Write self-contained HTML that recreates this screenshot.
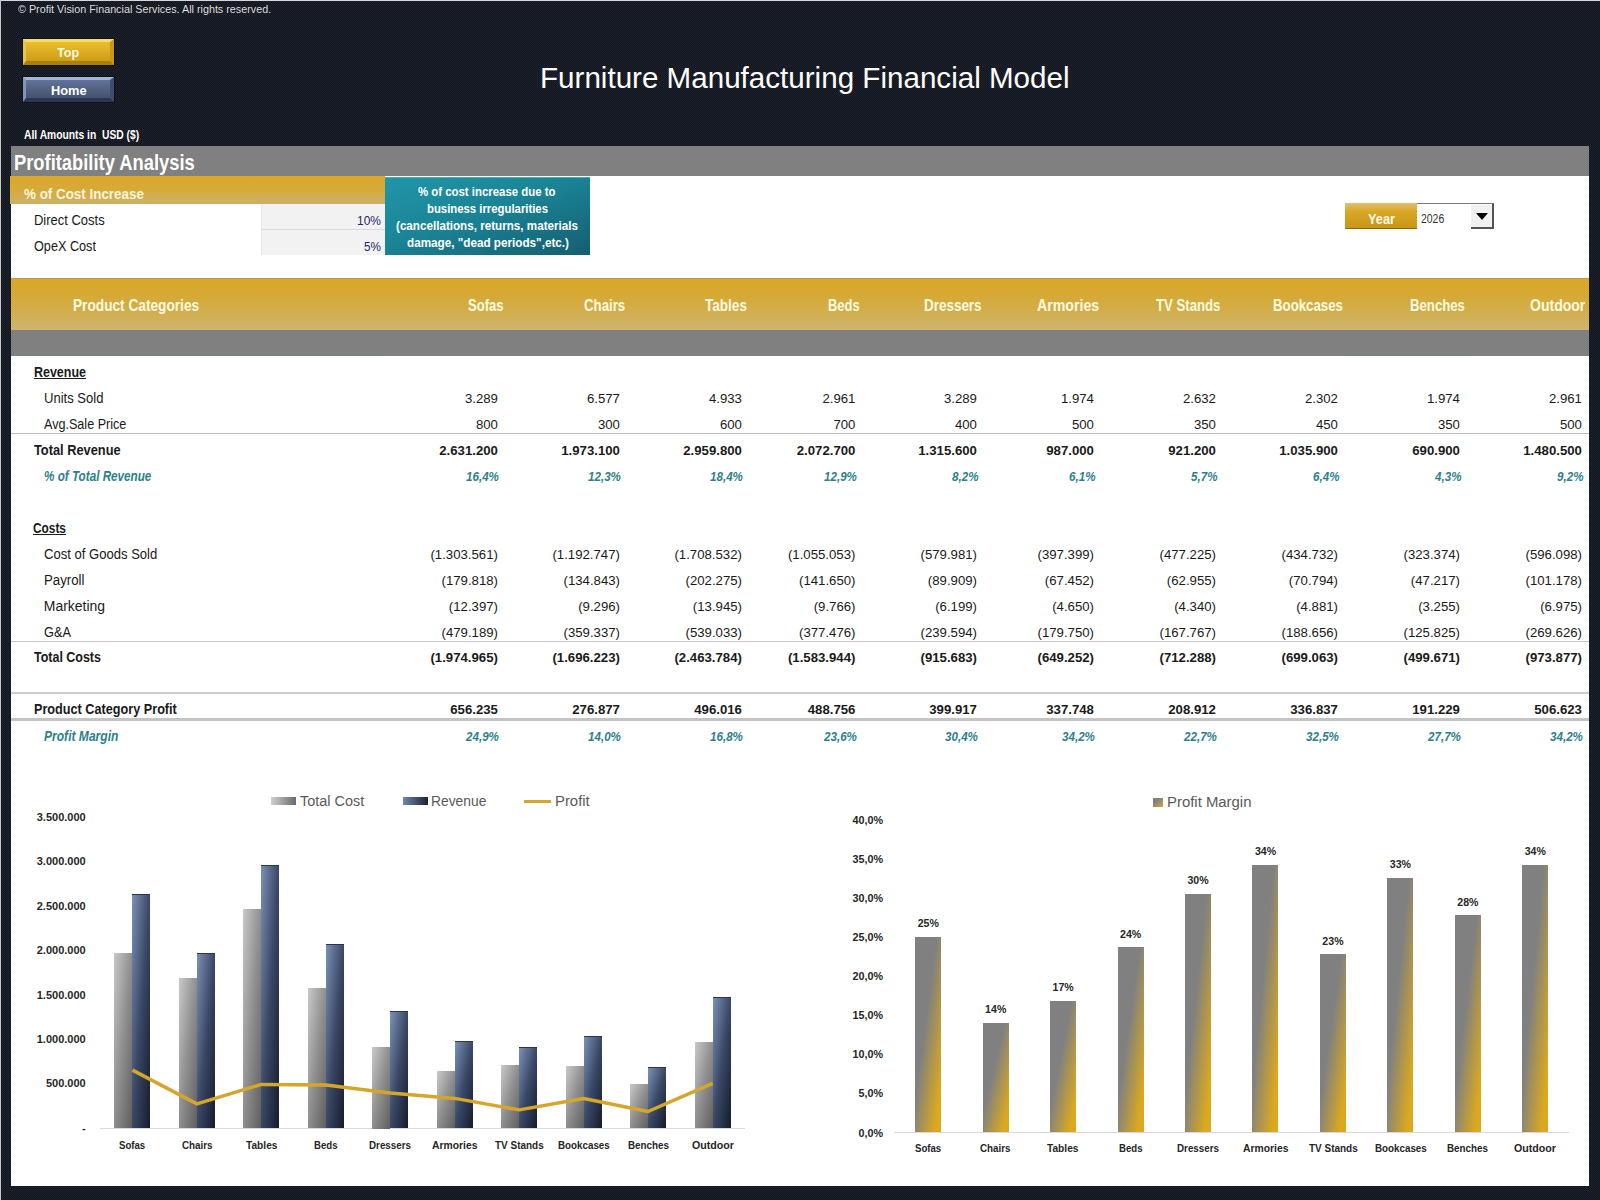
<!DOCTYPE html>
<html><head><meta charset="utf-8"><title>Furniture Manufacturing Financial Model</title>
<style>
html,body{margin:0;padding:0}
html{background:#181b25}
body{width:1600px;height:1200px;position:relative;overflow:hidden;background-color:#181b25;background-image:repeating-conic-gradient(#10131b 0 25%,#20242e 0 50%);background-size:2px 2px;font-family:"Liberation Sans",sans-serif}
.t{position:absolute;white-space:nowrap;transform-origin:0 0}
.r{position:absolute}
#edge{position:absolute;left:0;top:0;width:1600px;height:1px;background:#d8d8d8}
#edgel{position:absolute;left:0;top:0;width:1px;height:1200px;background:#c8c8c8}
</style></head><body>
<div id="edge"></div><div id="edgel"></div>
<div class="t" style="left:17.80px;top:3.00px;font-size:11.63px;line-height:11.63px;color:#dcdcdc;transform:scaleX(0.9264)">© Profit Vision Financial Services. All rights reserved.</div>
<div class="r" style="left:23.00px;top:39.00px;width:90.50px;height:26.00px;background:linear-gradient(#e9bf2e,#d9aa1e 60%,#cf9c18);border-style:solid;border-width:3px 4px 4px 3px;border-color:#f7dc6a #c9971a #a9800f #e9c548;box-sizing:border-box;box-shadow:0 0 0 1px rgba(0,0,0,.35)"></div>
<div class="t" style="left:57.30px;top:46.00px;font-size:13.66px;line-height:13.66px;color:#fffbe0;font-weight:bold;transform:scaleX(0.9191)">Top</div>
<div class="r" style="left:23.00px;top:77.00px;width:90.50px;height:25.00px;background:linear-gradient(#62749a,#50607f 55%,#44526f);border-style:solid;border-width:3px 4px 4px 3px;border-color:#a3b6da #3f4c6a #2b3650 #8394bb;box-sizing:border-box;box-shadow:0 0 0 1px rgba(0,0,0,.35)"></div>
<div class="t" style="left:50.50px;top:84.00px;font-size:13.66px;line-height:13.66px;color:#ffffff;font-weight:bold;transform:scaleX(0.9373)">Home</div>
<div class="t" style="left:540.30px;top:63.00px;font-size:29.94px;line-height:29.94px;color:#ffffff;transform:scaleX(0.9883)">Furniture Manufacturing Financial Model</div>
<div class="t" style="left:23.75px;top:129.00px;font-size:12.35px;line-height:12.35px;color:#ffffff;font-weight:bold;transform:scaleX(0.8340);white-space:pre">All Amounts in  USD ($)</div>
<div class="r" style="left:11.00px;top:146.00px;width:1578.00px;height:1040.00px;background:#fff"></div>
<div class="r" style="left:11.00px;top:146.00px;width:1578.00px;height:30.00px;background:#808080"></div>
<div class="t" style="left:14.25px;top:152.00px;font-size:21.80px;line-height:21.80px;color:#ffffff;font-weight:bold;transform:scaleX(0.8412)">Profitability Analysis</div>
<div class="r" style="left:10.00px;top:176.00px;width:375.00px;height:28.00px;background:linear-gradient(#dba726,#d6aa3c 50%,#cdb06a)"></div>
<div class="t" style="left:23.75px;top:187.00px;font-size:14.53px;line-height:14.53px;color:#fdf6d8;font-weight:bold;transform:scaleX(0.9230)">% of Cost Increase</div>
<div class="t" style="left:33.75px;top:213.00px;font-size:14.53px;line-height:14.53px;color:#1a1a1a;transform:scaleX(0.8940)">Direct Costs</div>
<div class="t" style="left:33.75px;top:239.00px;font-size:14.53px;line-height:14.53px;color:#1a1a1a;transform:scaleX(0.8723)">OpeX Cost</div>
<div class="r" style="left:261.00px;top:204.00px;width:124.00px;height:51.00px;background:#f2f2f2;border-left:1px solid #e6e6e6;box-sizing:border-box"></div>
<div class="r" style="left:261.00px;top:229.00px;width:124.00px;height:1.00px;background:#d9d9d9"></div>
<div class="t" style="left:357.00px;top:214.00px;font-size:13.66px;line-height:13.66px;color:#26266e;transform:scaleX(0.8746)">10%</div>
<div class="t" style="left:364.00px;top:240.00px;font-size:13.66px;line-height:13.66px;color:#26266e;transform:scaleX(0.8560)">5%</div>
<div class="r" style="left:385.00px;top:177.00px;width:205.00px;height:78.00px;background:linear-gradient(160deg,#2196a9 0%,#1a8496 45%,#145e70 100%);border-top:1px solid #4aa9b8;box-sizing:border-box"></div>
<div class="t" style="left:418.00px;top:185.00px;font-size:13.08px;line-height:13.08px;color:#ffffff;font-weight:bold;transform:scaleX(0.8716)">% of cost increase due to</div>
<div class="t" style="left:427.00px;top:202.00px;font-size:13.08px;line-height:13.08px;color:#ffffff;font-weight:bold;transform:scaleX(0.8669)">business irregularities</div>
<div class="t" style="left:396.00px;top:219.00px;font-size:13.08px;line-height:13.08px;color:#ffffff;font-weight:bold;transform:scaleX(0.8910)">(cancellations, returns, materials</div>
<div class="t" style="left:406.50px;top:236.00px;font-size:13.08px;line-height:13.08px;color:#ffffff;font-weight:bold;transform:scaleX(0.8948)">damage, &quot;dead periods&quot;,etc.)</div>
<div class="r" style="left:1344.50px;top:202.50px;width:72.50px;height:26.25px;background:linear-gradient(#e0c070 0%,#d9a722 35%,#c9961a 100%);border-bottom:1px solid #8a6a10;box-sizing:border-box"></div>
<div class="t" style="left:1367.50px;top:213.00px;font-size:13.95px;line-height:13.95px;color:#fffbe8;font-weight:bold;transform:scaleX(0.9149)">Year</div>
<div class="r" style="left:1417.00px;top:203.00px;width:77.00px;height:26.00px;background:#fff;border-top:1px solid #7a7a7a;border-right:2px solid #555;box-sizing:border-box"></div>
<div class="t" style="left:1420.50px;top:212.00px;font-size:13.08px;line-height:13.08px;color:#333333;transform:scaleX(0.7988)">2026</div>
<div class="r" style="left:1470.50px;top:205.00px;width:21.50px;height:24.00px;background:#f0f0f0;border-bottom:2px solid #555;box-sizing:border-box"></div>
<div class="r" style="left:1476px;top:213px;width:0;height:0;border-left:6px solid transparent;border-right:6px solid transparent;border-top:7px solid #000"></div>
<div class="r" style="left:11.00px;top:278.00px;width:1578.00px;height:52.00px;background:linear-gradient(#dba726 0%,#d4ab3e 45%,#ceb46c 100%);border-top:1px solid #b89a50;box-sizing:border-box"></div>
<div class="t" style="left:72.50px;top:298.00px;font-size:15.84px;line-height:15.84px;color:#fffbe0;font-weight:bold;transform:scaleX(0.8638)">Product Categories</div>
<div class="t" style="left:467.50px;top:298.00px;font-size:15.84px;line-height:15.84px;color:#fffbe0;font-weight:bold;transform:scaleX(0.8223)">Sofas</div>
<div class="t" style="left:583.75px;top:298.00px;font-size:15.84px;line-height:15.84px;color:#fffbe0;font-weight:bold;transform:scaleX(0.8372)">Chairs</div>
<div class="t" style="left:704.50px;top:298.00px;font-size:15.84px;line-height:15.84px;color:#fffbe0;font-weight:bold;transform:scaleX(0.8565)">Tables</div>
<div class="t" style="left:828.40px;top:298.00px;font-size:15.84px;line-height:15.84px;color:#fffbe0;font-weight:bold;transform:scaleX(0.8158)">Beds</div>
<div class="t" style="left:924.30px;top:298.00px;font-size:15.84px;line-height:15.84px;color:#fffbe0;font-weight:bold;transform:scaleX(0.8495)">Dressers</div>
<div class="t" style="left:1036.75px;top:298.00px;font-size:15.84px;line-height:15.84px;color:#fffbe0;font-weight:bold;transform:scaleX(0.8950)">Armories</div>
<div class="t" style="left:1156.30px;top:298.00px;font-size:15.84px;line-height:15.84px;color:#fffbe0;font-weight:bold;transform:scaleX(0.8313)">TV Stands</div>
<div class="t" style="left:1273.00px;top:298.00px;font-size:15.84px;line-height:15.84px;color:#fffbe0;font-weight:bold;transform:scaleX(0.8368)">Bookcases</div>
<div class="t" style="left:1409.50px;top:298.00px;font-size:15.84px;line-height:15.84px;color:#fffbe0;font-weight:bold;transform:scaleX(0.8325)">Benches</div>
<div class="t" style="left:1530.40px;top:298.00px;font-size:15.84px;line-height:15.84px;color:#fffbe0;font-weight:bold;transform:scaleX(0.8864)">Outdoor</div>
<div class="r" style="left:11.00px;top:330.00px;width:1578.00px;height:25.50px;background:#808080"></div>
<div class="r" style="left:11.00px;top:354.50px;width:374.00px;height:1.00px;background:#6f8a8c"></div>
<div class="r" style="left:1344.00px;top:354.50px;width:126.00px;height:1.00px;background:#6f8a8c"></div>
<div class="t" style="left:33.50px;top:366.00px;font-size:13.95px;line-height:13.95px;color:#1a1a1a;font-weight:bold;transform:scaleX(0.8937)">Revenue</div>
<div class="r" style="left:33.50px;top:377.90px;width:52.00px;height:1.20px;background:#1a1a1a"></div>
<div class="t" style="left:43.80px;top:392.00px;font-size:13.95px;line-height:13.95px;color:#1a1a1a;transform:scaleX(0.9367)">Units Sold</div>
<div class="t" style="left:464.93px;top:392.00px;font-size:13.20px;line-height:13.20px;color:#1a1a1a">3.289</div>
<div class="t" style="left:586.93px;top:392.00px;font-size:13.20px;line-height:13.20px;color:#1a1a1a">6.577</div>
<div class="t" style="left:708.93px;top:392.00px;font-size:13.20px;line-height:13.20px;color:#1a1a1a">4.933</div>
<div class="t" style="left:822.43px;top:392.00px;font-size:13.20px;line-height:13.20px;color:#1a1a1a">2.961</div>
<div class="t" style="left:943.93px;top:392.00px;font-size:13.20px;line-height:13.20px;color:#1a1a1a">3.289</div>
<div class="t" style="left:1060.93px;top:392.00px;font-size:13.20px;line-height:13.20px;color:#1a1a1a">1.974</div>
<div class="t" style="left:1182.93px;top:392.00px;font-size:13.20px;line-height:13.20px;color:#1a1a1a">2.632</div>
<div class="t" style="left:1304.93px;top:392.00px;font-size:13.20px;line-height:13.20px;color:#1a1a1a">2.302</div>
<div class="t" style="left:1426.93px;top:392.00px;font-size:13.20px;line-height:13.20px;color:#1a1a1a">1.974</div>
<div class="t" style="left:1548.93px;top:392.00px;font-size:13.20px;line-height:13.20px;color:#1a1a1a">2.961</div>
<div class="t" style="left:43.80px;top:418.00px;font-size:13.95px;line-height:13.95px;color:#1a1a1a;transform:scaleX(0.9030)">Avg.Sale Price</div>
<div class="t" style="left:475.96px;top:418.00px;font-size:13.20px;line-height:13.20px;color:#1a1a1a">800</div>
<div class="t" style="left:597.96px;top:418.00px;font-size:13.20px;line-height:13.20px;color:#1a1a1a">300</div>
<div class="t" style="left:719.96px;top:418.00px;font-size:13.20px;line-height:13.20px;color:#1a1a1a">600</div>
<div class="t" style="left:833.46px;top:418.00px;font-size:13.20px;line-height:13.20px;color:#1a1a1a">700</div>
<div class="t" style="left:954.96px;top:418.00px;font-size:13.20px;line-height:13.20px;color:#1a1a1a">400</div>
<div class="t" style="left:1071.96px;top:418.00px;font-size:13.20px;line-height:13.20px;color:#1a1a1a">500</div>
<div class="t" style="left:1193.96px;top:418.00px;font-size:13.20px;line-height:13.20px;color:#1a1a1a">350</div>
<div class="t" style="left:1315.96px;top:418.00px;font-size:13.20px;line-height:13.20px;color:#1a1a1a">450</div>
<div class="t" style="left:1437.96px;top:418.00px;font-size:13.20px;line-height:13.20px;color:#1a1a1a">350</div>
<div class="t" style="left:1559.96px;top:418.00px;font-size:13.20px;line-height:13.20px;color:#1a1a1a">500</div>
<div class="r" style="left:11.00px;top:432.70px;width:1578.00px;height:1.30px;background:#bfbfbf"></div>
<div class="t" style="left:33.50px;top:444.00px;font-size:13.95px;line-height:13.95px;color:#1a1a1a;font-weight:bold;transform:scaleX(0.9192)">Total Revenue</div>
<div class="t" style="left:439.26px;top:444.00px;font-size:13.20px;line-height:13.20px;color:#1a1a1a;font-weight:bold">2.631.200</div>
<div class="t" style="left:561.26px;top:444.00px;font-size:13.20px;line-height:13.20px;color:#1a1a1a;font-weight:bold">1.973.100</div>
<div class="t" style="left:683.26px;top:444.00px;font-size:13.20px;line-height:13.20px;color:#1a1a1a;font-weight:bold">2.959.800</div>
<div class="t" style="left:796.76px;top:444.00px;font-size:13.20px;line-height:13.20px;color:#1a1a1a;font-weight:bold">2.072.700</div>
<div class="t" style="left:918.26px;top:444.00px;font-size:13.20px;line-height:13.20px;color:#1a1a1a;font-weight:bold">1.315.600</div>
<div class="t" style="left:1046.28px;top:444.00px;font-size:13.20px;line-height:13.20px;color:#1a1a1a;font-weight:bold">987.000</div>
<div class="t" style="left:1168.28px;top:444.00px;font-size:13.20px;line-height:13.20px;color:#1a1a1a;font-weight:bold">921.200</div>
<div class="t" style="left:1279.26px;top:444.00px;font-size:13.20px;line-height:13.20px;color:#1a1a1a;font-weight:bold">1.035.900</div>
<div class="t" style="left:1412.28px;top:444.00px;font-size:13.20px;line-height:13.20px;color:#1a1a1a;font-weight:bold">690.900</div>
<div class="t" style="left:1523.26px;top:444.00px;font-size:13.20px;line-height:13.20px;color:#1a1a1a;font-weight:bold">1.480.500</div>
<div class="t" style="left:43.80px;top:470.00px;font-size:13.95px;line-height:13.95px;color:#2e7f8a;font-weight:bold;font-style:italic;transform:scaleX(0.8384)">% of Total Revenue</div>
<div class="t" style="left:466.07px;top:470.00px;font-size:13.20px;line-height:13.20px;color:#2e7f8a;font-weight:bold;font-style:italic;transform:scaleX(0.8800)">16,4%</div>
<div class="t" style="left:588.07px;top:470.00px;font-size:13.20px;line-height:13.20px;color:#2e7f8a;font-weight:bold;font-style:italic;transform:scaleX(0.8800)">12,3%</div>
<div class="t" style="left:710.07px;top:470.00px;font-size:13.20px;line-height:13.20px;color:#2e7f8a;font-weight:bold;font-style:italic;transform:scaleX(0.8800)">18,4%</div>
<div class="t" style="left:823.57px;top:470.00px;font-size:13.20px;line-height:13.20px;color:#2e7f8a;font-weight:bold;font-style:italic;transform:scaleX(0.8800)">12,9%</div>
<div class="t" style="left:951.52px;top:470.00px;font-size:13.20px;line-height:13.20px;color:#2e7f8a;font-weight:bold;font-style:italic;transform:scaleX(0.8800)">8,2%</div>
<div class="t" style="left:1068.52px;top:470.00px;font-size:13.20px;line-height:13.20px;color:#2e7f8a;font-weight:bold;font-style:italic;transform:scaleX(0.8800)">6,1%</div>
<div class="t" style="left:1190.52px;top:470.00px;font-size:13.20px;line-height:13.20px;color:#2e7f8a;font-weight:bold;font-style:italic;transform:scaleX(0.8800)">5,7%</div>
<div class="t" style="left:1312.52px;top:470.00px;font-size:13.20px;line-height:13.20px;color:#2e7f8a;font-weight:bold;font-style:italic;transform:scaleX(0.8800)">6,4%</div>
<div class="t" style="left:1434.52px;top:470.00px;font-size:13.20px;line-height:13.20px;color:#2e7f8a;font-weight:bold;font-style:italic;transform:scaleX(0.8800)">4,3%</div>
<div class="t" style="left:1556.52px;top:470.00px;font-size:13.20px;line-height:13.20px;color:#2e7f8a;font-weight:bold;font-style:italic;transform:scaleX(0.8800)">9,2%</div>
<div class="t" style="left:33.30px;top:522.00px;font-size:13.95px;line-height:13.95px;color:#1a1a1a;font-weight:bold;transform:scaleX(0.8507)">Costs</div>
<div class="r" style="left:33.30px;top:533.70px;width:33.00px;height:1.20px;background:#1a1a1a"></div>
<div class="t" style="left:43.80px;top:548.00px;font-size:13.95px;line-height:13.95px;color:#1a1a1a;transform:scaleX(0.9374)">Cost of Goods Sold</div>
<div class="t" style="left:430.48px;top:548.00px;font-size:13.20px;line-height:13.20px;color:#1a1a1a">(1.303.561)</div>
<div class="t" style="left:552.48px;top:548.00px;font-size:13.20px;line-height:13.20px;color:#1a1a1a">(1.192.747)</div>
<div class="t" style="left:674.48px;top:548.00px;font-size:13.20px;line-height:13.20px;color:#1a1a1a">(1.708.532)</div>
<div class="t" style="left:787.98px;top:548.00px;font-size:13.20px;line-height:13.20px;color:#1a1a1a">(1.055.053)</div>
<div class="t" style="left:920.50px;top:548.00px;font-size:13.20px;line-height:13.20px;color:#1a1a1a">(579.981)</div>
<div class="t" style="left:1037.50px;top:548.00px;font-size:13.20px;line-height:13.20px;color:#1a1a1a">(397.399)</div>
<div class="t" style="left:1159.50px;top:548.00px;font-size:13.20px;line-height:13.20px;color:#1a1a1a">(477.225)</div>
<div class="t" style="left:1281.50px;top:548.00px;font-size:13.20px;line-height:13.20px;color:#1a1a1a">(434.732)</div>
<div class="t" style="left:1403.50px;top:548.00px;font-size:13.20px;line-height:13.20px;color:#1a1a1a">(323.374)</div>
<div class="t" style="left:1525.50px;top:548.00px;font-size:13.20px;line-height:13.20px;color:#1a1a1a">(596.098)</div>
<div class="t" style="left:43.80px;top:574.00px;font-size:13.95px;line-height:13.95px;color:#1a1a1a;transform:scaleX(0.9489)">Payroll</div>
<div class="t" style="left:441.50px;top:574.00px;font-size:13.20px;line-height:13.20px;color:#1a1a1a">(179.818)</div>
<div class="t" style="left:563.50px;top:574.00px;font-size:13.20px;line-height:13.20px;color:#1a1a1a">(134.843)</div>
<div class="t" style="left:685.50px;top:574.00px;font-size:13.20px;line-height:13.20px;color:#1a1a1a">(202.275)</div>
<div class="t" style="left:799.00px;top:574.00px;font-size:13.20px;line-height:13.20px;color:#1a1a1a">(141.650)</div>
<div class="t" style="left:927.83px;top:574.00px;font-size:13.20px;line-height:13.20px;color:#1a1a1a">(89.909)</div>
<div class="t" style="left:1044.83px;top:574.00px;font-size:13.20px;line-height:13.20px;color:#1a1a1a">(67.452)</div>
<div class="t" style="left:1166.83px;top:574.00px;font-size:13.20px;line-height:13.20px;color:#1a1a1a">(62.955)</div>
<div class="t" style="left:1288.83px;top:574.00px;font-size:13.20px;line-height:13.20px;color:#1a1a1a">(70.794)</div>
<div class="t" style="left:1410.83px;top:574.00px;font-size:13.20px;line-height:13.20px;color:#1a1a1a">(47.217)</div>
<div class="t" style="left:1525.50px;top:574.00px;font-size:13.20px;line-height:13.20px;color:#1a1a1a">(101.178)</div>
<div class="t" style="left:43.80px;top:600.00px;font-size:13.95px;line-height:13.95px;color:#1a1a1a">Marketing</div>
<div class="t" style="left:448.83px;top:600.00px;font-size:13.20px;line-height:13.20px;color:#1a1a1a">(12.397)</div>
<div class="t" style="left:578.16px;top:600.00px;font-size:13.20px;line-height:13.20px;color:#1a1a1a">(9.296)</div>
<div class="t" style="left:692.83px;top:600.00px;font-size:13.20px;line-height:13.20px;color:#1a1a1a">(13.945)</div>
<div class="t" style="left:813.66px;top:600.00px;font-size:13.20px;line-height:13.20px;color:#1a1a1a">(9.766)</div>
<div class="t" style="left:935.16px;top:600.00px;font-size:13.20px;line-height:13.20px;color:#1a1a1a">(6.199)</div>
<div class="t" style="left:1052.16px;top:600.00px;font-size:13.20px;line-height:13.20px;color:#1a1a1a">(4.650)</div>
<div class="t" style="left:1174.16px;top:600.00px;font-size:13.20px;line-height:13.20px;color:#1a1a1a">(4.340)</div>
<div class="t" style="left:1296.16px;top:600.00px;font-size:13.20px;line-height:13.20px;color:#1a1a1a">(4.881)</div>
<div class="t" style="left:1418.16px;top:600.00px;font-size:13.20px;line-height:13.20px;color:#1a1a1a">(3.255)</div>
<div class="t" style="left:1540.16px;top:600.00px;font-size:13.20px;line-height:13.20px;color:#1a1a1a">(6.975)</div>
<div class="t" style="left:43.80px;top:626.00px;font-size:13.95px;line-height:13.95px;color:#1a1a1a;transform:scaleX(0.9132)">G&amp;A</div>
<div class="t" style="left:441.50px;top:626.00px;font-size:13.20px;line-height:13.20px;color:#1a1a1a">(479.189)</div>
<div class="t" style="left:563.50px;top:626.00px;font-size:13.20px;line-height:13.20px;color:#1a1a1a">(359.337)</div>
<div class="t" style="left:685.50px;top:626.00px;font-size:13.20px;line-height:13.20px;color:#1a1a1a">(539.033)</div>
<div class="t" style="left:799.00px;top:626.00px;font-size:13.20px;line-height:13.20px;color:#1a1a1a">(377.476)</div>
<div class="t" style="left:920.50px;top:626.00px;font-size:13.20px;line-height:13.20px;color:#1a1a1a">(239.594)</div>
<div class="t" style="left:1037.50px;top:626.00px;font-size:13.20px;line-height:13.20px;color:#1a1a1a">(179.750)</div>
<div class="t" style="left:1159.50px;top:626.00px;font-size:13.20px;line-height:13.20px;color:#1a1a1a">(167.767)</div>
<div class="t" style="left:1281.50px;top:626.00px;font-size:13.20px;line-height:13.20px;color:#1a1a1a">(188.656)</div>
<div class="t" style="left:1403.50px;top:626.00px;font-size:13.20px;line-height:13.20px;color:#1a1a1a">(125.825)</div>
<div class="t" style="left:1525.50px;top:626.00px;font-size:13.20px;line-height:13.20px;color:#1a1a1a">(269.626)</div>
<div class="r" style="left:11.00px;top:640.50px;width:1578.00px;height:1.70px;background:#c6c6c6"></div>
<div class="t" style="left:33.75px;top:651.00px;font-size:13.95px;line-height:13.95px;color:#1a1a1a;font-weight:bold;transform:scaleX(0.8942)">Total Costs</div>
<div class="t" style="left:430.48px;top:651.00px;font-size:13.20px;line-height:13.20px;color:#1a1a1a;font-weight:bold">(1.974.965)</div>
<div class="t" style="left:552.48px;top:651.00px;font-size:13.20px;line-height:13.20px;color:#1a1a1a;font-weight:bold">(1.696.223)</div>
<div class="t" style="left:674.48px;top:651.00px;font-size:13.20px;line-height:13.20px;color:#1a1a1a;font-weight:bold">(2.463.784)</div>
<div class="t" style="left:787.98px;top:651.00px;font-size:13.20px;line-height:13.20px;color:#1a1a1a;font-weight:bold">(1.583.944)</div>
<div class="t" style="left:920.50px;top:651.00px;font-size:13.20px;line-height:13.20px;color:#1a1a1a;font-weight:bold">(915.683)</div>
<div class="t" style="left:1037.50px;top:651.00px;font-size:13.20px;line-height:13.20px;color:#1a1a1a;font-weight:bold">(649.252)</div>
<div class="t" style="left:1159.50px;top:651.00px;font-size:13.20px;line-height:13.20px;color:#1a1a1a;font-weight:bold">(712.288)</div>
<div class="t" style="left:1281.50px;top:651.00px;font-size:13.20px;line-height:13.20px;color:#1a1a1a;font-weight:bold">(699.063)</div>
<div class="t" style="left:1403.50px;top:651.00px;font-size:13.20px;line-height:13.20px;color:#1a1a1a;font-weight:bold">(499.671)</div>
<div class="t" style="left:1525.50px;top:651.00px;font-size:13.20px;line-height:13.20px;color:#1a1a1a;font-weight:bold">(973.877)</div>
<div class="r" style="left:11.00px;top:692.00px;width:1578.00px;height:1.80px;background:#cdcdcd"></div>
<div class="t" style="left:34.00px;top:703.00px;font-size:13.95px;line-height:13.95px;color:#1a1a1a;font-weight:bold;transform:scaleX(0.9085)">Product Category Profit</div>
<div class="t" style="left:450.28px;top:703.00px;font-size:13.20px;line-height:13.20px;color:#1a1a1a;font-weight:bold">656.235</div>
<div class="t" style="left:572.28px;top:703.00px;font-size:13.20px;line-height:13.20px;color:#1a1a1a;font-weight:bold">276.877</div>
<div class="t" style="left:694.28px;top:703.00px;font-size:13.20px;line-height:13.20px;color:#1a1a1a;font-weight:bold">496.016</div>
<div class="t" style="left:807.78px;top:703.00px;font-size:13.20px;line-height:13.20px;color:#1a1a1a;font-weight:bold">488.756</div>
<div class="t" style="left:929.28px;top:703.00px;font-size:13.20px;line-height:13.20px;color:#1a1a1a;font-weight:bold">399.917</div>
<div class="t" style="left:1046.28px;top:703.00px;font-size:13.20px;line-height:13.20px;color:#1a1a1a;font-weight:bold">337.748</div>
<div class="t" style="left:1168.28px;top:703.00px;font-size:13.20px;line-height:13.20px;color:#1a1a1a;font-weight:bold">208.912</div>
<div class="t" style="left:1290.28px;top:703.00px;font-size:13.20px;line-height:13.20px;color:#1a1a1a;font-weight:bold">336.837</div>
<div class="t" style="left:1412.28px;top:703.00px;font-size:13.20px;line-height:13.20px;color:#1a1a1a;font-weight:bold">191.229</div>
<div class="t" style="left:1534.28px;top:703.00px;font-size:13.20px;line-height:13.20px;color:#1a1a1a;font-weight:bold">506.623</div>
<div class="r" style="left:11.00px;top:718.00px;width:1578.00px;height:2.80px;background:#c4c4c4"></div>
<div class="t" style="left:43.80px;top:730.00px;font-size:13.95px;line-height:13.95px;color:#2e7f8a;font-weight:bold;font-style:italic;transform:scaleX(0.8655)">Profit Margin</div>
<div class="t" style="left:466.07px;top:730.00px;font-size:13.20px;line-height:13.20px;color:#2e7f8a;font-weight:bold;font-style:italic;transform:scaleX(0.8800)">24,9%</div>
<div class="t" style="left:588.07px;top:730.00px;font-size:13.20px;line-height:13.20px;color:#2e7f8a;font-weight:bold;font-style:italic;transform:scaleX(0.8800)">14,0%</div>
<div class="t" style="left:710.07px;top:730.00px;font-size:13.20px;line-height:13.20px;color:#2e7f8a;font-weight:bold;font-style:italic;transform:scaleX(0.8800)">16,8%</div>
<div class="t" style="left:823.57px;top:730.00px;font-size:13.20px;line-height:13.20px;color:#2e7f8a;font-weight:bold;font-style:italic;transform:scaleX(0.8800)">23,6%</div>
<div class="t" style="left:945.07px;top:730.00px;font-size:13.20px;line-height:13.20px;color:#2e7f8a;font-weight:bold;font-style:italic;transform:scaleX(0.8800)">30,4%</div>
<div class="t" style="left:1062.07px;top:730.00px;font-size:13.20px;line-height:13.20px;color:#2e7f8a;font-weight:bold;font-style:italic;transform:scaleX(0.8800)">34,2%</div>
<div class="t" style="left:1184.07px;top:730.00px;font-size:13.20px;line-height:13.20px;color:#2e7f8a;font-weight:bold;font-style:italic;transform:scaleX(0.8800)">22,7%</div>
<div class="t" style="left:1306.07px;top:730.00px;font-size:13.20px;line-height:13.20px;color:#2e7f8a;font-weight:bold;font-style:italic;transform:scaleX(0.8800)">32,5%</div>
<div class="t" style="left:1428.07px;top:730.00px;font-size:13.20px;line-height:13.20px;color:#2e7f8a;font-weight:bold;font-style:italic;transform:scaleX(0.8800)">27,7%</div>
<div class="t" style="left:1550.07px;top:730.00px;font-size:13.20px;line-height:13.20px;color:#2e7f8a;font-weight:bold;font-style:italic;transform:scaleX(0.8800)">34,2%</div>
<div class="t" style="left:36.75px;top:812.00px;font-size:11.00px;line-height:11.00px;color:#262626;font-weight:bold">3.500.000</div>
<div class="t" style="left:36.75px;top:856.00px;font-size:11.00px;line-height:11.00px;color:#262626;font-weight:bold">3.000.000</div>
<div class="t" style="left:36.75px;top:901.00px;font-size:11.00px;line-height:11.00px;color:#262626;font-weight:bold">2.500.000</div>
<div class="t" style="left:36.75px;top:945.00px;font-size:11.00px;line-height:11.00px;color:#262626;font-weight:bold">2.000.000</div>
<div class="t" style="left:36.75px;top:990.00px;font-size:11.00px;line-height:11.00px;color:#262626;font-weight:bold">1.500.000</div>
<div class="t" style="left:36.75px;top:1034.00px;font-size:11.00px;line-height:11.00px;color:#262626;font-weight:bold">1.000.000</div>
<div class="t" style="left:45.94px;top:1078.00px;font-size:11.00px;line-height:11.00px;color:#262626;font-weight:bold">500.000</div>
<div class="t" style="left:82.02px;top:1123.00px;font-size:11.00px;line-height:11.00px;color:#262626;font-weight:bold">-</div>
<div class="r" style="left:100.00px;top:1128.00px;width:645.00px;height:1.20px;background:#d9d9d9"></div>
<div class="r" style="left:113.50px;top:952.73px;width:18.50px;height:175.77px;background:linear-gradient(to bottom right,#c9c9c9 0%,#8f8f8f 50%,#5f5f5f 100%)"></div>
<div class="r" style="left:132.00px;top:894.32px;width:18.00px;height:234.18px;background:linear-gradient(to bottom right,#7b91b6 0%,#3a4866 50%,#151c2c 100%);border-top:1px solid #2a3450;box-sizing:border-box"></div>
<div class="t" style="left:119.38px;top:1140.00px;font-size:10.60px;line-height:10.60px;color:#262626;font-weight:bold;transform:scaleX(0.9088)">Sofas</div>
<div class="r" style="left:178.50px;top:977.54px;width:18.50px;height:150.96px;background:linear-gradient(to bottom right,#c9c9c9 0%,#8f8f8f 50%,#5f5f5f 100%)"></div>
<div class="r" style="left:197.00px;top:952.89px;width:18.00px;height:175.61px;background:linear-gradient(to bottom right,#7b91b6 0%,#3a4866 50%,#151c2c 100%);border-top:1px solid #2a3450;box-sizing:border-box"></div>
<div class="t" style="left:181.70px;top:1140.00px;font-size:10.60px;line-height:10.60px;color:#262626;font-weight:bold;transform:scaleX(0.9252)">Chairs</div>
<div class="r" style="left:242.50px;top:909.22px;width:18.50px;height:219.28px;background:linear-gradient(to bottom right,#c9c9c9 0%,#8f8f8f 50%,#5f5f5f 100%)"></div>
<div class="r" style="left:261.00px;top:865.08px;width:18.00px;height:263.42px;background:linear-gradient(to bottom right,#7b91b6 0%,#3a4866 50%,#151c2c 100%);border-top:1px solid #2a3450;box-sizing:border-box"></div>
<div class="t" style="left:245.65px;top:1140.00px;font-size:10.60px;line-height:10.60px;color:#262626;font-weight:bold;transform:scaleX(0.9602)">Tables</div>
<div class="r" style="left:307.50px;top:987.53px;width:18.50px;height:140.97px;background:linear-gradient(to bottom right,#c9c9c9 0%,#8f8f8f 50%,#5f5f5f 100%)"></div>
<div class="r" style="left:326.00px;top:944.03px;width:18.00px;height:184.47px;background:linear-gradient(to bottom right,#7b91b6 0%,#3a4866 50%,#151c2c 100%);border-top:1px solid #2a3450;box-sizing:border-box"></div>
<div class="t" style="left:314.10px;top:1140.00px;font-size:10.60px;line-height:10.60px;color:#262626;font-weight:bold;transform:scaleX(0.9067)">Beds</div>
<div class="r" style="left:371.50px;top:1047.00px;width:18.50px;height:81.50px;background:linear-gradient(to bottom right,#c9c9c9 0%,#8f8f8f 50%,#5f5f5f 100%)"></div>
<div class="r" style="left:390.00px;top:1011.41px;width:18.00px;height:117.09px;background:linear-gradient(to bottom right,#7b91b6 0%,#3a4866 50%,#151c2c 100%);border-top:1px solid #2a3450;box-sizing:border-box"></div>
<div class="t" style="left:369.30px;top:1140.00px;font-size:10.60px;line-height:10.60px;color:#262626;font-weight:bold;transform:scaleX(0.9258)">Dressers</div>
<div class="r" style="left:436.50px;top:1070.72px;width:18.50px;height:57.78px;background:linear-gradient(to bottom right,#c9c9c9 0%,#8f8f8f 50%,#5f5f5f 100%)"></div>
<div class="r" style="left:455.00px;top:1040.66px;width:18.00px;height:87.84px;background:linear-gradient(to bottom right,#7b91b6 0%,#3a4866 50%,#151c2c 100%);border-top:1px solid #2a3450;box-sizing:border-box"></div>
<div class="t" style="left:432.00px;top:1140.00px;font-size:10.60px;line-height:10.60px;color:#262626;font-weight:bold;transform:scaleX(0.9778)">Armories</div>
<div class="r" style="left:500.50px;top:1065.11px;width:18.50px;height:63.39px;background:linear-gradient(to bottom right,#c9c9c9 0%,#8f8f8f 50%,#5f5f5f 100%)"></div>
<div class="r" style="left:519.00px;top:1046.51px;width:18.00px;height:81.99px;background:linear-gradient(to bottom right,#7b91b6 0%,#3a4866 50%,#151c2c 100%);border-top:1px solid #2a3450;box-sizing:border-box"></div>
<div class="t" style="left:494.83px;top:1140.00px;font-size:10.60px;line-height:10.60px;color:#262626;font-weight:bold;transform:scaleX(0.9405)">TV Stands</div>
<div class="r" style="left:565.50px;top:1066.28px;width:18.50px;height:62.22px;background:linear-gradient(to bottom right,#c9c9c9 0%,#8f8f8f 50%,#5f5f5f 100%)"></div>
<div class="r" style="left:584.00px;top:1036.30px;width:18.00px;height:92.20px;background:linear-gradient(to bottom right,#7b91b6 0%,#3a4866 50%,#151c2c 100%);border-top:1px solid #2a3450;box-sizing:border-box"></div>
<div class="t" style="left:557.78px;top:1140.00px;font-size:10.60px;line-height:10.60px;color:#262626;font-weight:bold;transform:scaleX(0.9246)">Bookcases</div>
<div class="r" style="left:629.50px;top:1084.03px;width:18.50px;height:44.47px;background:linear-gradient(to bottom right,#c9c9c9 0%,#8f8f8f 50%,#5f5f5f 100%)"></div>
<div class="r" style="left:648.00px;top:1067.01px;width:18.00px;height:61.49px;background:linear-gradient(to bottom right,#7b91b6 0%,#3a4866 50%,#151c2c 100%);border-top:1px solid #2a3450;box-sizing:border-box"></div>
<div class="t" style="left:627.60px;top:1140.00px;font-size:10.60px;line-height:10.60px;color:#262626;font-weight:bold;transform:scaleX(0.9276)">Benches</div>
<div class="r" style="left:694.50px;top:1041.82px;width:18.50px;height:86.68px;background:linear-gradient(to bottom right,#c9c9c9 0%,#8f8f8f 50%,#5f5f5f 100%)"></div>
<div class="r" style="left:713.00px;top:996.74px;width:18.00px;height:131.76px;background:linear-gradient(to bottom right,#7b91b6 0%,#3a4866 50%,#151c2c 100%);border-top:1px solid #2a3450;box-sizing:border-box"></div>
<div class="t" style="left:691.55px;top:1140.00px;font-size:10.60px;line-height:10.60px;color:#262626;font-weight:bold;transform:scaleX(1.0044)">Outdoor</div>
<svg class="r" style="left:0;top:0" width="1600" height="1200"><polyline points="132.5,1070.1 196.9,1103.9 261.4,1084.4 325.9,1085.0 390.3,1092.9 454.8,1098.4 519.2,1109.9 583.7,1098.5 648.1,1111.5 712.6,1083.4" fill="none" stroke="#d4a72c" stroke-width="3.5" stroke-linejoin="round"/></svg>
<div class="r" style="left:271.25px;top:797.00px;width:25.00px;height:8.00px;background:linear-gradient(90deg,#d0d0d0,#6a6a6a)"></div>
<div class="t" style="left:300.00px;top:794.00px;font-size:14.53px;line-height:14.53px;color:#595959;transform:scaleX(0.9945)">Total Cost</div>
<div class="r" style="left:402.50px;top:797.00px;width:25.00px;height:8.00px;background:linear-gradient(90deg,#7088b0,#1a2236)"></div>
<div class="t" style="left:431.25px;top:794.00px;font-size:14.53px;line-height:14.53px;color:#595959;transform:scaleX(0.9534)">Revenue</div>
<div class="r" style="left:524.25px;top:800.00px;width:27.00px;height:2.50px;background:#d4a72c"></div>
<div class="t" style="left:554.50px;top:794.00px;font-size:14.53px;line-height:14.53px;color:#595959;transform:scaleX(1.0239)">Profit</div>
<div class="t" style="left:852.38px;top:815.00px;font-size:10.80px;line-height:10.80px;color:#262626;font-weight:bold">40,0%</div>
<div class="t" style="left:852.38px;top:854.00px;font-size:10.80px;line-height:10.80px;color:#262626;font-weight:bold">35,0%</div>
<div class="t" style="left:852.38px;top:893.00px;font-size:10.80px;line-height:10.80px;color:#262626;font-weight:bold">30,0%</div>
<div class="t" style="left:852.38px;top:932.00px;font-size:10.80px;line-height:10.80px;color:#262626;font-weight:bold">25,0%</div>
<div class="t" style="left:852.38px;top:971.00px;font-size:10.80px;line-height:10.80px;color:#262626;font-weight:bold">20,0%</div>
<div class="t" style="left:852.38px;top:1010.00px;font-size:10.80px;line-height:10.80px;color:#262626;font-weight:bold">15,0%</div>
<div class="t" style="left:852.38px;top:1049.00px;font-size:10.80px;line-height:10.80px;color:#262626;font-weight:bold">10,0%</div>
<div class="t" style="left:858.38px;top:1088.00px;font-size:10.80px;line-height:10.80px;color:#262626;font-weight:bold">5,0%</div>
<div class="t" style="left:858.38px;top:1128.00px;font-size:10.80px;line-height:10.80px;color:#262626;font-weight:bold">0,0%</div>
<div class="r" style="left:894.30px;top:1131.50px;width:675.20px;height:1.20px;background:#d9d9d9"></div>
<div class="r" style="left:915.15px;top:937.28px;width:26.00px;height:194.72px;background:linear-gradient(to bottom right,#808080 0%,#808080 42%,#dca91e 88%)"></div>
<div class="t" style="left:917.65px;top:918.00px;font-size:10.60px;line-height:10.60px;color:#262626;font-weight:bold">25%</div>
<div class="t" style="left:915.12px;top:1143.00px;font-size:10.60px;line-height:10.60px;color:#262626;font-weight:bold;transform:scaleX(0.9088)">Sofas</div>
<div class="r" style="left:982.60px;top:1022.52px;width:26.00px;height:109.48px;background:linear-gradient(to bottom right,#808080 0%,#808080 42%,#dca91e 88%)"></div>
<div class="t" style="left:985.10px;top:1004.00px;font-size:10.60px;line-height:10.60px;color:#262626;font-weight:bold">14%</div>
<div class="t" style="left:980.45px;top:1143.00px;font-size:10.60px;line-height:10.60px;color:#262626;font-weight:bold;transform:scaleX(0.9252)">Chairs</div>
<div class="r" style="left:1050.05px;top:1000.62px;width:26.00px;height:131.38px;background:linear-gradient(to bottom right,#808080 0%,#808080 42%,#dca91e 88%)"></div>
<div class="t" style="left:1052.55px;top:982.00px;font-size:10.60px;line-height:10.60px;color:#262626;font-weight:bold">17%</div>
<div class="t" style="left:1047.40px;top:1143.00px;font-size:10.60px;line-height:10.60px;color:#262626;font-weight:bold;transform:scaleX(0.9602)">Tables</div>
<div class="r" style="left:1117.50px;top:947.45px;width:26.00px;height:184.55px;background:linear-gradient(to bottom right,#808080 0%,#808080 42%,#dca91e 88%)"></div>
<div class="t" style="left:1120.00px;top:929.00px;font-size:10.60px;line-height:10.60px;color:#262626;font-weight:bold">24%</div>
<div class="t" style="left:1118.85px;top:1143.00px;font-size:10.60px;line-height:10.60px;color:#262626;font-weight:bold;transform:scaleX(0.9067)">Beds</div>
<div class="r" style="left:1184.95px;top:894.27px;width:26.00px;height:237.73px;background:linear-gradient(to bottom right,#808080 0%,#808080 42%,#dca91e 88%)"></div>
<div class="t" style="left:1187.45px;top:875.00px;font-size:10.60px;line-height:10.60px;color:#262626;font-weight:bold">30%</div>
<div class="t" style="left:1177.05px;top:1143.00px;font-size:10.60px;line-height:10.60px;color:#262626;font-weight:bold;transform:scaleX(0.9258)">Dressers</div>
<div class="r" style="left:1252.40px;top:864.56px;width:26.00px;height:267.44px;background:linear-gradient(to bottom right,#808080 0%,#808080 42%,#dca91e 88%)"></div>
<div class="t" style="left:1254.90px;top:846.00px;font-size:10.60px;line-height:10.60px;color:#262626;font-weight:bold">34%</div>
<div class="t" style="left:1242.75px;top:1143.00px;font-size:10.60px;line-height:10.60px;color:#262626;font-weight:bold;transform:scaleX(0.9778)">Armories</div>
<div class="r" style="left:1319.85px;top:954.49px;width:26.00px;height:177.51px;background:linear-gradient(to bottom right,#808080 0%,#808080 42%,#dca91e 88%)"></div>
<div class="t" style="left:1322.35px;top:936.00px;font-size:10.60px;line-height:10.60px;color:#262626;font-weight:bold">23%</div>
<div class="t" style="left:1308.58px;top:1143.00px;font-size:10.60px;line-height:10.60px;color:#262626;font-weight:bold;transform:scaleX(0.9405)">TV Stands</div>
<div class="r" style="left:1387.30px;top:877.85px;width:26.00px;height:254.15px;background:linear-gradient(to bottom right,#808080 0%,#808080 42%,#dca91e 88%)"></div>
<div class="t" style="left:1389.80px;top:859.00px;font-size:10.60px;line-height:10.60px;color:#262626;font-weight:bold">33%</div>
<div class="t" style="left:1374.53px;top:1143.00px;font-size:10.60px;line-height:10.60px;color:#262626;font-weight:bold;transform:scaleX(0.9246)">Bookcases</div>
<div class="r" style="left:1454.75px;top:915.39px;width:26.00px;height:216.61px;background:linear-gradient(to bottom right,#808080 0%,#808080 42%,#dca91e 88%)"></div>
<div class="t" style="left:1457.25px;top:897.00px;font-size:10.60px;line-height:10.60px;color:#262626;font-weight:bold">28%</div>
<div class="t" style="left:1447.35px;top:1143.00px;font-size:10.60px;line-height:10.60px;color:#262626;font-weight:bold;transform:scaleX(0.9276)">Benches</div>
<div class="r" style="left:1522.20px;top:864.56px;width:26.00px;height:267.44px;background:linear-gradient(to bottom right,#808080 0%,#808080 42%,#dca91e 88%)"></div>
<div class="t" style="left:1524.70px;top:846.00px;font-size:10.60px;line-height:10.60px;color:#262626;font-weight:bold">34%</div>
<div class="t" style="left:1514.30px;top:1143.00px;font-size:10.60px;line-height:10.60px;color:#262626;font-weight:bold;transform:scaleX(1.0044)">Outdoor</div>
<div class="r" style="left:1153.00px;top:798.40px;width:9.50px;height:8.60px;background:linear-gradient(to bottom right,#808080 30%,#d0a830)"></div>
<div class="t" style="left:1166.80px;top:795.00px;font-size:14.53px;line-height:14.53px;color:#595959;transform:scaleX(1.0265)">Profit Margin</div>
</body></html>
